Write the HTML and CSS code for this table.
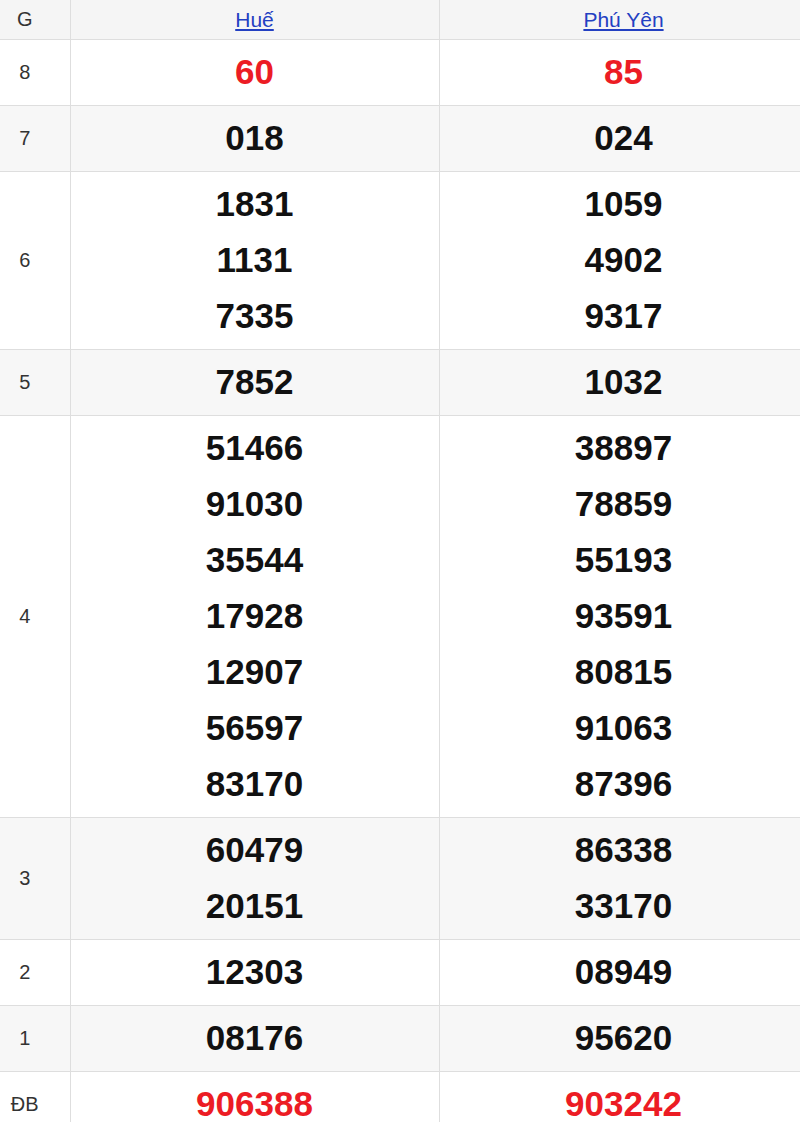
FILE: index.html
```html
<!DOCTYPE html>
<html lang="vi">
<head>
<meta charset="utf-8">
<title>Kết quả xổ số</title>
<link rel="stylesheet" href="styles.css">
</head>
<body>
<table class="kq">
  <colgroup>
    <col class="c-label">
    <col class="c-prov">
    <col class="c-prov">
  </colgroup>
  <thead>
    <tr>
      <th class="label">G</th>
      <th class="prov"><a href="#">Huế</a></th>
      <th class="prov"><a href="#">Phú Yên</a></th>
    </tr>
  </thead>
  <tbody>
    <tr>
      <td class="label">8</td>
      <td class="num red">60</td>
      <td class="num red">85</td>
    </tr>
    <tr class="alt">
      <td class="label">7</td>
      <td class="num">018</td>
      <td class="num">024</td>
    </tr>
    <tr>
      <td class="label">6</td>
      <td class="num"><div>1831</div><div>1131</div><div>7335</div></td>
      <td class="num"><div>1059</div><div>4902</div><div>9317</div></td>
    </tr>
    <tr class="alt">
      <td class="label">5</td>
      <td class="num">7852</td>
      <td class="num">1032</td>
    </tr>
    <tr>
      <td class="label">4</td>
      <td class="num"><div>51466</div><div>91030</div><div>35544</div><div>17928</div><div>12907</div><div>56597</div><div>83170</div></td>
      <td class="num"><div>38897</div><div>78859</div><div>55193</div><div>93591</div><div>80815</div><div>91063</div><div>87396</div></td>
    </tr>
    <tr class="alt">
      <td class="label">3</td>
      <td class="num"><div>60479</div><div>20151</div></td>
      <td class="num"><div>86338</div><div>33170</div></td>
    </tr>
    <tr>
      <td class="label">2</td>
      <td class="num">12303</td>
      <td class="num">08949</td>
    </tr>
    <tr class="alt">
      <td class="label">1</td>
      <td class="num">08176</td>
      <td class="num">95620</td>
    </tr>
    <tr>
      <td class="label">ĐB</td>
      <td class="num red">906388</td>
      <td class="num red">903242</td>
    </tr>
  </tbody>
</table>
</body>
</html>
```

FILE: styles.css
```css
html, body {
  margin: 0;
  padding: 0;
  background: #ffffff;
  overflow: hidden;
}

body {
  width: 800px;
  font-family: "Liberation Sans", Arial, sans-serif;
  color: #222;
}

.kq {
  border-collapse: collapse;
  width: 808px;
  table-layout: fixed;
}

.c-label {
  width: 70px;
}

.c-prov {
  width: 369px;
}

.kq th,
.kq td {
  border: 1px solid #dedede;
  padding: 0;
  text-align: center;
  vertical-align: middle;
}

.kq tr > :first-child {
  border-left: none;
}

.kq thead tr > * {
  border-top: none;
}

.kq thead th {
  background: #f5f5f5;
  height: 39px;
  font-weight: normal;
}

.kq th.label {
  font-size: 20px;
  color: #333;
}

.kq th.prov a {
  font-size: 21px;
  color: #2340c2;
  text-decoration: underline;
}

.label {
  font-size: 20px;
  color: #333;
  padding-right: 20px !important;
}

.alt td {
  background: #f7f7f7;
}

.num {
  font-size: 35px;
  font-weight: bold;
  line-height: 56px;
  color: #111;
  padding: 4px 0 5px !important;
}

.num.red {
  color: #ec1c24;
}
```
